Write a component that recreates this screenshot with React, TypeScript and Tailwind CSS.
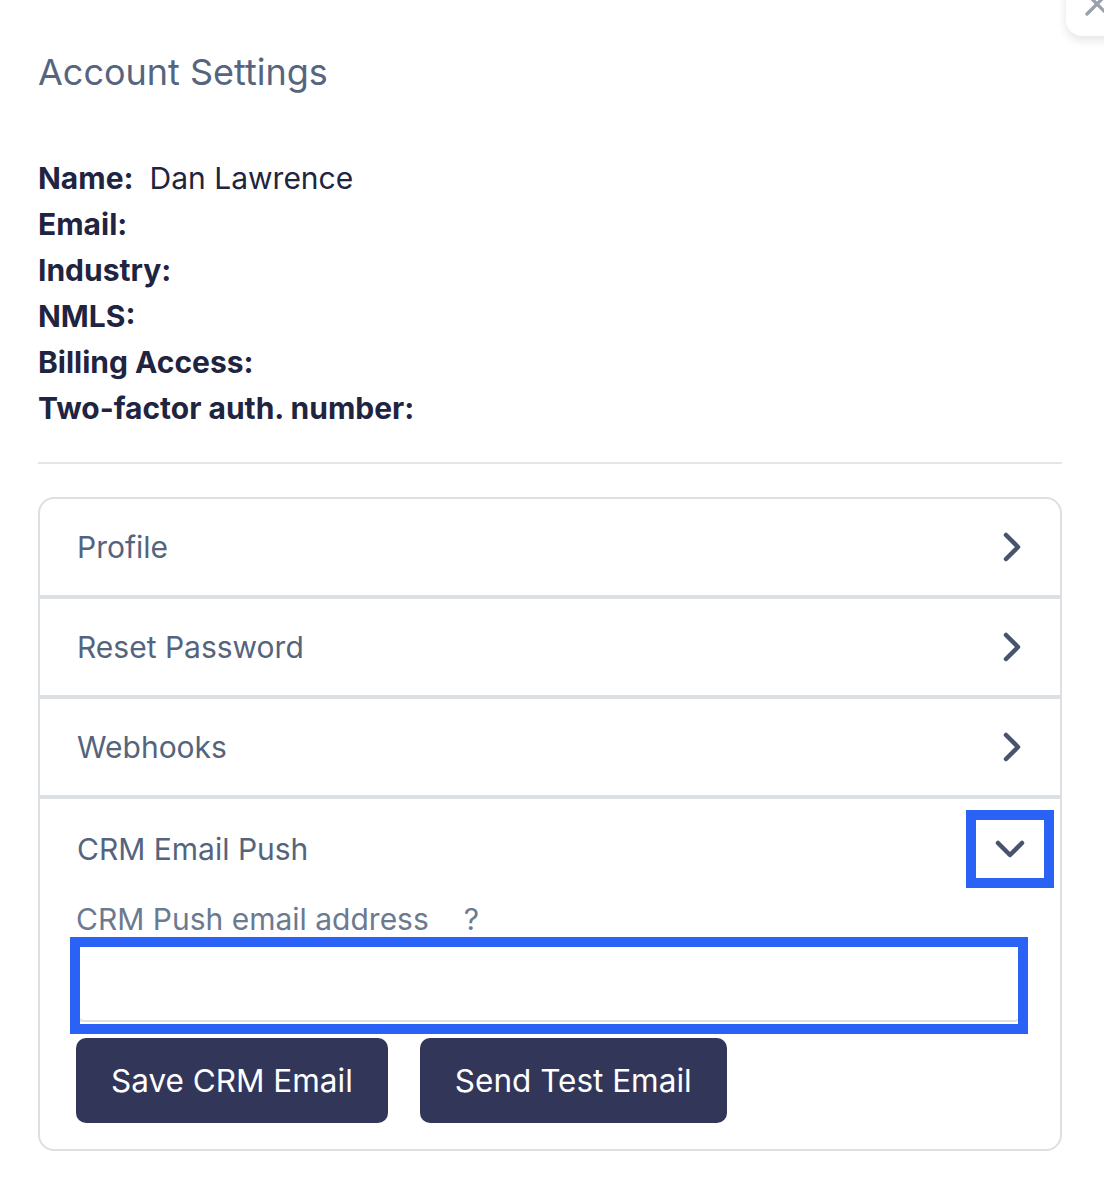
import { ChevronDown, ChevronRight, X } from "lucide-react";

const infoRows: { label: string; value?: string }[] = [
  { label: "Name:", value: "Dan Lawrence" },
  { label: "Email:" },
  { label: "Industry:" },
  { label: "NMLS:" },
  { label: "Billing Access:" },
  { label: "Two-factor auth. number:" },
];

const sections = ["Profile", "Reset Password", "Webhooks"];

export default function App() {
  return (
    <div className="relative min-h-[1204px] overflow-hidden bg-white px-[38px] pt-[50px] font-['Inter',sans-serif]">
      {/* close button peeking in from the corner */}
      <div className="absolute left-[1066px] top-[-44px] h-[80px] w-[80px] rounded-[16px] bg-white shadow-[0_4px_10px_rgba(15,23,42,0.12)]">
        <X className="absolute left-[11px] top-[28px] text-[#9aa1ad]" size={40} strokeWidth={2} />
      </div>

      <h2 className="text-[36px] leading-[44px] text-[#56657f]">Account Settings</h2>

      <div className="mt-[61px] text-[30px] leading-[46px] text-[#1f2440]">
        {infoRows.map((row) => (
          <p key={row.label}>
            <span className="font-bold">{row.label}</span>
            {row.value ? <span className="ml-[16px]">{row.value}</span> : null}
          </p>
        ))}
      </div>

      <div className="mt-[31px] h-[2px] w-[1024px] bg-[#e3e5e8]" />

      <div className="mt-[33px] w-[1024px] rounded-[16px] border-2 border-[#dcdfe3]">
        {sections.map((title) => (
          <div
            key={title}
            className="flex h-[100px] items-center justify-between border-b-4 border-[#dcdfe3] pl-[37px] pr-[24px]"
          >
            <span className="text-[30px] text-[#55647d]">{title}</span>
            <ChevronRight className="text-[#46546d]" size={48} strokeWidth={2.25} />
          </div>
        ))}

        <div className="flex h-[100px] items-center justify-between pl-[37px] pr-[16px]">
          <span className="text-[30px] text-[#55647d]">CRM Email Push</span>
          <button
            type="button"
            className="flex h-[58px] w-[68px] items-center justify-center outline-[10px] outline-solid outline-[#2962f5]"
          >
            <ChevronDown className="text-[#46546d]" size={48} strokeWidth={2.25} />
          </button>
        </div>

        <div className="px-[36px] pb-[26px]">
          <div className="mt-[2px] flex items-center text-[30px] leading-[36px] text-[#6b7a90]">
            <span>CRM Push email address</span>
            <span className="ml-[35px]">?</span>
          </div>

          <div className="relative mt-[4px] w-[946px]">
            <input
              type="text"
              className="block h-[81px] w-full rounded-[8px] border-2 border-[#dcdfe3] bg-white px-4 text-[28px] outline-none"
            />
            <div className="pointer-events-none absolute -left-[6px] -top-[4px] h-[97px] w-[958px] border-[10px] border-[#2962f5]" />
          </div>

          <div className="mt-[16px] flex gap-[32px]">
            <button
              type="button"
              className="h-[85px] rounded-[10px] bg-[#32375a] px-[35px] text-[31.5px] text-white"
            >
              Save CRM Email
            </button>
            <button
              type="button"
              className="h-[85px] rounded-[10px] bg-[#32375a] px-[35px] text-[31.5px] text-white"
            >
              Send Test Email
            </button>
          </div>
        </div>
      </div>
    </div>
  );
}
